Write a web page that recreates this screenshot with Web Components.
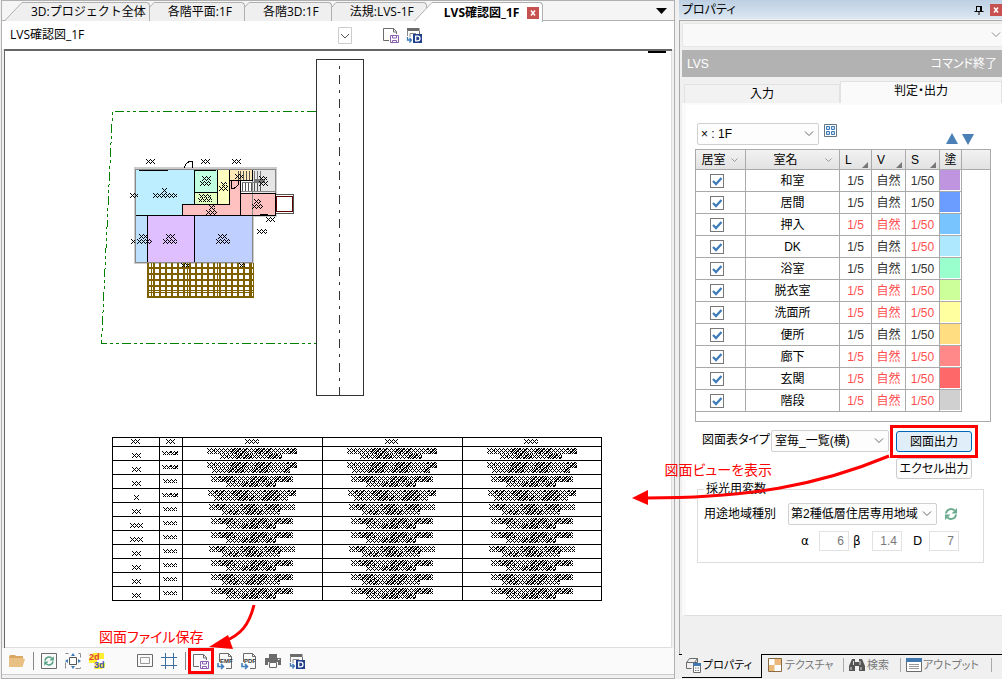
<!DOCTYPE html>
<html lang="ja">
<head>
<meta charset="utf-8">
<title>LVS確認図_1F</title>
<style>
html,body{margin:0;height:100%;overflow:hidden}
body{background:#f0f0f0;color:#000;font:12px/16px "Liberation Sans","Noto Sans CJK JP",sans-serif;font-feature-settings:"palt"}
</style>
</head>
<body>
<cad-app></cad-app>
<script>
const BASE = `<style>
*{box-sizing:border-box}
button,select,input{font:inherit;font-feature-settings:inherit;color:inherit;margin:0}
button{padding:0;border:0;background:none}
select{appearance:none;border:1px solid #d0d0d0;border-radius:2px;background:#fdfdfd url("data:image/svg+xml,%3Csvg xmlns='http://www.w3.org/2000/svg' width='10' height='6'%3E%3Cpath d='M1 .5l4 4 4-4' fill='none' stroke='%23666'/%3E%3C/svg%3E") no-repeat right 4px center}
svg{display:block}
</style>`;
function define(name, html, setup) {
  customElements.define(name, class extends HTMLElement {
    connectedCallback() {
      if (this.shadowRoot) return;
      const root = this.attachShadow({mode: 'open'});
      const t = document.createElement('template');
      t.innerHTML = BASE + (typeof html === 'function' ? html(this) : html);
      root.append(t.content.cloneNode(true));
      if (setup) setup(root, this);
    }
  });
}

/* ---------- icons ---------- */
const page = '<path d="M6 13.500H.5v-12h10l3 3V7M10.500 1.500v3.500h3" fill="none" stroke="#6b6b6b"/>';
const fileOut = s => `<path d="M2.500 9V.5h9l3 3v12H9M11.500.5v3h3" fill="none" stroke="#6b6b6b"/><text x="3" y="10" font-family="Liberation Sans" font-weight="bold" font-size="6" fill="#333">${s}</text><path d="M1 10v3.500h5M4 11l2.500 2.500L4 16" fill="none" stroke="#3c7ab8" stroke-width="1.500"/>`;
const cycle = c => `<path d="M3 7.500a5 5 0 0 1 8.500-3M13 8.500a5 5 0 0 1-8.500 3" fill="none" stroke="${c}" stroke-width="2"/><path d="M14 2v5.500H8.500zM2 14V8.500h5.500z" fill="${c}"/>`;
const ICONS = {
  save: page + '<path d="M7.500 8.500h8v7h-8z" fill="#fff" stroke="#8a5fb0"/><path d="M9.500 8.500v2.500h4V8.500M9.500 15.500v-2h4v2" fill="none" stroke="#8a5fb0"/>',
  export: '<path d="M1 1h12.500v3H1z" fill="#6b6b6b"/><path d="M1.500 3v6M4 10V6.500h6" fill="none" stroke="#888"/><path d="M13.500 4v3" stroke="#6b6b6b"/><path d="M1.500 10v3h4M3.500 11l2 2-2 2.500" fill="none" stroke="#3c7ab8" stroke-width="1.300"/><path d="M7 7h9v9H7z" fill="#23408e"/><path d="M9.700 9.200h2a2.200 2.200 0 0 1 0 4.600h-2z" fill="none" stroke="#fff" stroke-width="1.300"/>',
  folder: '<path d="M0 4l1-2h5l1 1h7v3H0z" fill="#d9a762"/><path d="M0 14V5h13l3 1-2.500 8z" fill="#e8c084"/>',
  refreshbox: '<path d="M.5.5h15v15H.5z" fill="none" stroke="#6b6b6b"/><g transform="translate(1.600 1.600) scale(.8)">' + cycle('#56a184') + '</g>',
  refresh: cycle('#6bab8e'),
  fit: '<path d="M.5.5h15v15H.5z" fill="none" stroke="#888" stroke-dasharray="3 10 3 0"/><path d="M4.500 4.500h7v7h-7z" fill="#fff" stroke="#555"/><path d="M8 0l2 3H6zM8 16l2-3H6zM0 8l3-2v4zM16 8l-3-2v4z" fill="#3c7ab8"/>',
  twothree: '<path d="M0 5L4 0h11v6H8v4H0z" fill="#ffef30"/><path d="M6 10h10v4l-3 2H5z" fill="#ffef30"/><text x="0" y="7" font-family="Liberation Sans" font-weight="bold" font-size="9" fill="#e04040">2d</text><text x="5" y="15" font-family="Liberation Sans" font-weight="bold" font-size="9" fill="#4050c0">3d</text>',
  frame: '<path d="M.5 1.500h15v12H.5z" fill="none" stroke="#6b6b6b"/><path d="M3.500 4.500h9v6h-9z" fill="none" stroke="#999"/>',
  hash: '<path d="M4.500 0v16M12.500 0v16M0 4.500h16M0 12.500h16" fill="none" stroke="#3c6f9f"/>',
  emf: fileOut('EMF'), pdf: fileOut('PDF'),
  printer: '<path d="M4 1h8v4H4zM0 5h16v7h-3V9H3v3H0z" fill="#6b6b6b"/><path d="M4.500 9.500h7v5h-7z" fill="#fff" stroke="#6b6b6b"/><path d="M13 6.500h1.500" stroke="#fff"/>',
  grid: '<path d="M1.500 1.500h12v12h-12z" fill="#fff" stroke="#66747f"/><path d="M3.500 3.500h3v3h-3zM8.500 3.500h3v3h-3zM3.500 8.500h3v3h-3zM8.500 8.500h3v3h-3z" fill="#cfe2f3" stroke="#3c7ab8"/>',
  up: '<path d="M8 2l6 11H2z" fill="#4a80b5"/>',
  down: '<path d="M2 3h12L8 14z" fill="#4a80b5"/>',
  pin: '<path d="M5.500 4v5M5 4.500h4M3.500 9.500h9M8 9v4" fill="none" stroke="#000"/><path d="M9 4h2v6H9z"/>',
  prop: '<path d="M1.500 5.500l3-4h8v4h-11v6h5M9.500 5.500l3-4v4" fill="none" stroke="#6b6b6b"/><path d="M8.500 7.500h7v8h-7z" fill="#fff" stroke="#6b6b6b"/><path d="M8 6h8v3H8z" fill="#4178b0"/><path d="M10 11h1.500m1 0H14m-4 2.500h1.500m1 0H14" stroke="#777"/>',
  texture: '<path d="M1.500 1.500h13v13h-13z" fill="#fff" stroke="#8a6a45"/><path d="M7.500 2H14v6H7.500zM2 8h5.500v6H2z" fill="#eab878"/>',
  search: '<path d="M3 2h3v3h4V2h3l3 7v5h-6V9H6v5H0V9z" fill="#555"/><path d="M2 10v3M12 10v3M4.500 4v4M11 4v4" stroke="#ddd"/>',
  output: '<path d="M.5 1.500h15v13H.5z" fill="#fff" stroke="#6b6b6b"/><path d="M0 1h16v4H0z" fill="#4178b0"/><path d="M3 7.500h10m-10 2h10m-10 2h10" stroke="#999"/>'
};
define('cad-icon', el => `<style>:host{display:block;width:16px;height:16px;flex:none}svg{overflow:visible}</style><svg width="16" height="16" viewBox="0 0 16 16" aria-hidden="true">${ICONS[el.getAttribute('name')]}</svg>`);

/* ---------- document tabs ---------- */
define('doc-tab', el => {
  const on = el.hasAttribute('active'), slope = on || el.hasAttribute('first'), w = slope ? 19 : 5, fill = on ? '#fff' : '#efefef';
  return `<style>
:host{display:flex;height:19px;position:relative}
:host([active]){margin-left:-13px;height:20px;font-weight:bold}
svg{flex:none}
button{flex:1;display:flex;align-items:center;gap:8px;white-space:nowrap;background:${fill};border:1px solid #b0b0b0;border-width:1px 1px 0 0;border-radius:0 4px 0 0;padding:0 12px 0 13px}
:host([first]) button{padding:0 3px 0 8px}
:host([active]) button{padding:0 3px 0 11px}
</style><svg width="${w}" height="${on ? 20 : 19}"><path d="${slope ? 'M0 20L18 .5H19V20z' : 'M0 19V4.500L4 .5H5V19z'}" fill="${fill}"/><path d="${slope ? 'M0 19.500L18 .5h1' : 'M0 5L4 .5h1'}" fill="none" stroke="#b0b0b0"/></svg><button role="tab"><slot></slot></button>`;
});
define('doc-tabs', `<style>
:host{display:flex;height:20px;flex:none;align-items:flex-start;padding:1px 0 0 2px;background:#f5f5f5;border-bottom:1px solid #b0b0b0;font:12px/16px "Open Sans","Noto Sans CJK JP",sans-serif}
.x{display:block;width:12px;height:12px;background:#c75050}
.more{margin:6px 7px 0 auto}
</style>
<doc-tab first>3D:プロジェクト全体</doc-tab><doc-tab>各階平面:1F</doc-tab><doc-tab>各階3D:1F</doc-tab><doc-tab>法規:LVS-1F</doc-tab>
<doc-tab active>LVS確認図_1F<svg class="x" viewBox="0 0 12 12"><path d="M4 3.500l4 5M8 3.500l-4 5" stroke="#fff" stroke-width="1.500"/></svg></doc-tab>
<button class="more" aria-label="タブ一覧"><svg width="11" height="6"><path d="M0 0h11L5.500 6z"/></svg></button>`);

define('view-bar', `<style>
:host{display:flex;height:28px;flex:none;align-items:center;background:#fff;padding:0 0 0 3px;gap:7px;font:12px/16px "Open Sans","Noto Sans CJK JP",sans-serif}
select{width:347px;height:22px;border:0;padding:0 5px;background:#fff url("data:image/svg+xml,%3Csvg xmlns='http://www.w3.org/2000/svg' width='14' height='17'%3E%3Cpath d='M.5.5h13v16H.5z' fill='%23fff' stroke='%23ccc'/%3E%3Cpath d='M3 7l4 4 4-4' fill='none' stroke='%23555'/%3E%3C/svg%3E") no-repeat right center}
button:first-of-type{margin-left:24px}
</style><select aria-label="ビュー"><option>LVS確認図_1F</option></select>
<button aria-label="図面ファイル保存"><cad-icon name="save"></cad-icon></button><button aria-label="図面出力"><cad-icon name="export"></cad-icon></button>`);

/* ---------- drawing ---------- */
/* Annotation too small to resolve at this zoom: a lattice of crossed strokes. */
function scribble(x, y, w, h, dense) {
  let d = '';
  for (let i = 0; i < w; i++) {
    const packed = dense && (((i >> 3) * 5 + x) % 7 > 2) && i > 6;
    for (let j = 0; j < h; j++)
      if (((i + j) & 3) == 0 || ((i - j) & 3) == 0 || (packed && ((i + j) % 3 == 0)))
        d += `M${x + i} ${y + j}h1v1h-1z`;
  }
  return d;
}
function drawing() {
  const R = (x, y, w, h, f) => `<path d="M${x} ${y}h${w}v${h}h${-w}z" fill="${f}"/>`;
  let s = '';
  s += '<path d="M316 111.500H112.500L101.500 343.500H316" fill="none" stroke="#008000" stroke-dasharray="9 3 3 3 3 3"/>';
  s += '<path d="M316.500 59.500h47v336h-47z" fill="#fff" stroke="#333"/><path d="M339.500 66v329" stroke="#333" stroke-dasharray="3 6 9 6"/>';
  s += '<path d="M135 168h141v48h-23v47H135z" fill="none" stroke="#ccc" stroke-width="2"/>';
  s += R(136,170,58,46,'#bdeeff') + R(195,170,22,22,'#c0ffe0') + R(195,193,22,11,'#e0ffc0') + R(218,170,12,34,'#ffffc0') + R(182,204,59,12,'#ffc0c0') + R(230,181,11,24,'#ffc0c0') + R(230,170,11,11,'#ffe8b8') + R(241,170,12,11,'#ffe8b8') + R(253,170,22,23,'#e6e6e6') + R(241,193,35,23,'#ffc0c0') + R(136,216,11,46,'#bde0ff') + R(148,216,46,46,'#dfbfff') + R(195,216,58,46,'#bfcfff');
  s += '<path d="M238.500 171v9m2-9v9m3-9v9m3-9v9m3-9v9m3-9v9M242.500 182v9m3-9v9m3-9v9m3-9v9m3-9v9m3-9v9m3-9v9" stroke="#555"/><path d="M254.500 171v10m3-10v10m3-10v10M242 182.500h22" stroke="#777"/>' + R(254,179,11,4,'#777');
  s += '<path d="M135.500 169.500h140v46h-23v47h-117zM252.500 170v92M241 191.500h34" fill="none" stroke="#888"/>';
  s += '<path d="M139 170.500h29M195 170.500h21M136 215.500h139v-22h-34M194.500 170v34M194 192.500h23M217.500 170v34M229.500 170v34.500H182.500V215M230 180.500h22V170M240.500 181v34M147.500 216v46M194.500 216v46M260 214.500h8" fill="none" stroke="#000"/>';
  s += '<path d="M184.500 168a8 7 0 0 1 8-7v7M239 181a8 8 0 0 1-8 8v-8" fill="none" stroke="#000"/>';
  s += '<path d="M276 194.500h17.500v19H276" fill="#fff" stroke="#555"/><path d="M276.500 196.500h16v15h-16z" fill="none" stroke="#5a0000"/>';
  let deck = '';
  for (let i = 0; i < 18; i++) deck += R(147 + i * 6, 263, 2, 34, '#7f5f00');
  for (const x of [151,154,187,217,251,253]) deck += R(x, 263, 1, 34, '#7f5f00');
  for (const y of [267,273,279,285,296]) deck += R(147, y, 107, 2, '#7f5f00');
  s += deck + R(147,290,107,1,'#7f5f00') + R(147,292,107,1,'#7f5f00') + R(136,262,117,1,'#888');
  let d = '';
  for (const a of [[146,159,9,5],[201,159,9,5],[232,159,9,5],[130,193,8,5],[162,188,5,5],[153,193,24,5],[202,176,9,5],[200,181,11,5],[199,194,12,4],[198,198,14,4],[221,182,6,4],[219,186,9,5],[209,205,6,5],[206,210,11,5],[254,199,7,5],[252,204,11,5],[266,217,9,5],[257,229,10,5],[235,174,8,5],[259,176,8,4],[259,181,9,5],[139,234,8,5],[131,239,4,5],[137,239,15,5],[166,234,9,5],[163,239,14,5],[218,234,9,5],[216,239,14,5],[181,263,8,4],[239,263,6,4]])
    d += scribble(...a);
  const X = [112,159,182,322,462,601];
  let lines = '';
  for (const x of X) lines += `M${x + .5} 437v164`;
  lines += 'M112 437.500h490';
  for (let i = 0; i < 12; i++) lines += `M112 ${446.5 + 14 * i}h490`;
  d += scribble(131,439,9,5) + scribble(166,439,9,5) + scribble(245,439,14,5) + scribble(385,439,13,5) + scribble(524,439,14,5);
  const W = [[90,62],[90,78],[82,50],[88,74],[86,58],[82,50],[82,50],[86,58],[82,50],[82,58],[82,50]];
  W.forEach(([a, b], i) => {
    const t = 446 + 14 * i, n = i == 3 ? 5 : i == 5 || i == 6 ? 13 : 9;
    d += scribble(136 - (n >> 1), t + 7, n, 5) + scribble(a > 86 ? 162 : 163, t + 5, a > 86 ? 16 : 14, 4, 1);
    for (const c of [252, 392, 532]) d += scribble(c - a / 2, t + 2, a, 6, 1) + scribble(c - b / 2 - 1, t + 8, b, 5, 1);
  });
  return s + `<path d="${lines}" stroke="#000"/><path d="${d}"/><path d="M648 51h18v2h-18z"/>`;
}
define('cad-drawing', () => `<style>:host{display:block;flex:1;min-height:0;margin:0 2px;background:#fff;border:solid #666;border-width:2px 0 0 1px;overflow:hidden}
.in{height:100%;border-right:1px solid #ddd;border-bottom:1px solid #ddd;overflow:hidden}</style>
<div class="in"><svg width="666" height="595" shape-rendering="crispEdges" role="img" aria-label="LVS確認図 1F"><g transform="translate(-5 -51)">${drawing()}</g></svg></div>`);

define('output-bar', `<style>
:host{display:flex;flex:none;height:27px;align-items:center;gap:8px;padding-left:7px;background:#fafafa;border-bottom:1px solid #ccc;margin-bottom:3px}
i{height:18px;border-left:1px solid #888;margin-right:-1px}
.gap{width:16px}
.hot{outline:3px solid red;outline-offset:2px}
</style>
<button aria-label="開く"><cad-icon name="folder"></cad-icon></button><i></i>
<button aria-label="更新"><cad-icon name="refreshbox"></cad-icon></button><button aria-label="全体表示"><cad-icon name="fit"></cad-icon></button><button aria-label="2D 3D"><cad-icon name="twothree"></cad-icon></button><span class="gap"></span>
<button aria-label="用紙枠"><cad-icon name="frame"></cad-icon></button><button aria-label="グリッド"><cad-icon name="hash"></cad-icon></button><i></i>
<button class="hot" aria-label="図面ファイル保存"><cad-icon name="save"></cad-icon></button><button aria-label="EMF出力"><cad-icon name="emf"></cad-icon></button><button aria-label="PDF出力"><cad-icon name="pdf"></cad-icon></button><button aria-label="印刷"><cad-icon name="printer"></cad-icon></button><button aria-label="図面へ"><cad-icon name="export"></cad-icon></button>`);

/* ---------- room table ---------- */
const ROOMS = [['和室','kkk','#bf95df'],['居間','kkk','#6b9cff'],['押入','rrr','#78c4ff'],['DK','kkr','#aee8ff'],['浴室','kkk','#99ffcc'],['脱衣室','rrr','#ccff99'],['洗面所','rrr','#ffffa0'],['便所','kkk','#ffdd80'],['廊下','rrr','#ff8888'],['玄関','rrr','#ff6868'],['階段','rrr','#d0d0d0']];
define('room-table', () => {
  const chev = '<svg width="7" height="4"><path d="M.5.5l3 3 3-3" fill="none" stroke="#999"/></svg>', tri = '<svg width="6" height="6"><path d="M6 0v6H0z" fill="#777"/></svg>';
  return `<style>
:host{display:block;border:1px solid #aaa;height:273px;background:#fff;flex:none}
table{border-collapse:separate;border-spacing:0;table-layout:fixed;width:100%}
th,td{padding:0;text-align:center;font-weight:normal;border:solid #aaa;border-width:0 1px 1px 0;overflow:hidden;white-space:nowrap}
th{height:20px;background:linear-gradient(#f2f2f2,#e2e2e2)}
th:last-child{border-right:0}
td{height:22px;color:#333}
td:nth-child(2){color:#000}
td:last-child{border:0}
th div{display:flex;align-items:center;height:19px}
th div span{flex:1;text-align:center}
th svg{margin-right:7px}
th.t span{text-align:left;padding-left:5px}
th.t svg{margin:11px 3px 0 0}
td.r{color:#ff5050}
td.c i{display:block;height:20px;width:20px;margin-bottom:1px}
td:first-child{padding-right:7px}
input{appearance:none;display:block;width:14px;height:14px;margin:0 auto;border:1px solid #777;background:#fff}
input:checked{background:#fff url("data:image/svg+xml,%3Csvg xmlns='http://www.w3.org/2000/svg' width='12' height='12'%3E%3Cpath d='M2 6l3 3 5.500-6' fill='none' stroke='%233f7cb8' stroke-width='2.300'/%3E%3C/svg%3E")}
</style><table><colgroup><col style="width:50px"><col style="width:94px"><col style="width:32px"><col style="width:34px"><col style="width:34px"><col style="width:22px"><col></colgroup>
<thead><tr><th><div><span>居室</span>${chev}</div></th><th><div><span>室名</span>${chev}</div></th><th class="t"><div><span>L</span>${tri}</div></th><th class="t"><div><span>V</span>${tri}</div></th><th class="t"><div><span>S</span>${tri}</div></th><th>塗</th><th></th></tr></thead>
<tbody>${ROOMS.map(([n, k, c]) => `<tr><td><input type="checkbox" checked aria-label="${n}"></td><td>${n}</td><td class="${k[0]}">1/5</td><td class="${k[1]}">自然</td><td class="${k[2]}">1/50</td><td class="c"><i style="background:${c}"></i></td><td></td></tr>`).join('')}</tbody></table>`;
});

/* ---------- property panel ---------- */
define('property-panel', `<style>
:host{display:flex;flex-direction:column;width:323px;flex:none;overflow:hidden}
.title{display:flex;align-items:center;height:19px;flex:none;padding-left:3px;background:linear-gradient(#bccfe2,#dce7f2)}
h2{flex:1;margin:0;font:inherit}
.x{background:#c75050;width:12px;height:12px;margin-left:3px;overflow:hidden}
main{display:flex;flex-direction:column;flex:1;min-height:0;margin-top:1px;border-top:1px solid #aaa;border-left:1px solid #aaa;padding:2px 0 38px 2px}
.obj{flex:none;height:24px;width:100%;border-color:#e2e2e2;opacity:.7;border-right:0;background-position:right 1px center}
.cmd{flex:none;display:flex;justify-content:space-between;align-items:center;height:27px;margin-top:3px;padding:0 5px;background:#b2b2b2;color:#fff}
.tabs{flex:none;display:flex;align-items:flex-end;height:26px;padding-left:2px}
.tabs button{flex:1;height:19px;background:#f2f2f2;border:1px solid #e2e2e2;border-bottom:0}
.tabs .on{height:22px;background:#fafafa;flex:0 0 162px;padding-bottom:4px}
.body{flex:1;min-height:0;display:flex;flex-direction:column;background:#fff;border:solid #fafafa;border-width:2px 0 0 4px;border-bottom:1px solid #ddd;padding:18px 11px 0 9px;overflow:hidden}
.row{display:flex;align-items:center;flex:none}
.floor{align-items:flex-start;height:26px;padding-left:2px}
.floor select{width:122px;height:22px;padding:0 3px}
.floor .list{margin-left:4px}
.floor .up{margin:8px 0 0 auto}
.floor .down{margin:8px 15px 0 0}
.out{margin:8px 19px 0 7px;align-items:flex-start}
.out label{width:69px;margin-top:2px;white-space:nowrap}
.out select{width:118px;height:22px;padding:0 3px}
.col{display:flex;flex-direction:column;gap:6px;margin:1px 0 0 auto;width:76px}
.col button{height:21px;width:100%;border:1px solid #ccc;border-radius:3px;background:#fdfdfd;white-space:nowrap}
.hot{height:21px;outline:3px solid red;outline-offset:3px}
.col .hot button{background:#e0eef9;border-color:#0067b8}
fieldset{margin:2px 7px 0 2px;padding:0 0 11px;border:1px solid #dcdcdc;min-width:0}
legend{margin-left:6px;padding:0 2px;height:16px}
.zone{padding:6px 0 0 6px}
.zone label{width:84px}
.zone select{width:149px;height:22px;padding:0 18px 0 2px}
.zone cad-icon{margin-left:6px}
.num{justify-content:flex-end;padding:6px 24px 0 0}
.num label{width:11px;margin:0 7px 0 6px;font:12px/16px "DejaVu Sans","Liberation Sans",sans-serif}
.num label:nth-of-type(2){margin:0 8px 0 4px}
.num label:nth-of-type(3){margin:0 5px 0 11px}
.num input{width:30px;height:20px;border:1px solid #e2e2e2;padding:0 4px;text-align:right;background:#fff;color:#777}
nav{display:flex;flex:none;height:24px;color:#777;border-top:1px solid #000;margin-bottom:1px;font-size:11px}
nav a{display:flex;flex:none;width:82px;align-items:center;gap:2px;color:inherit;text-decoration:none;white-space:nowrap;padding:0 0 3px 5px;border:0}
nav a::after{content:"";height:14px;margin-left:auto;border-right:1px solid #aaa}
nav .on{width:80px;color:#000;background:#f0f0f0;border:solid #000;border-width:0 1px 1px 0;margin:-1px 0 0 3px;padding:1px 0 3px 3px}
nav .on::after{display:none}
nav .s{width:57px}
nav .o{width:91px;gap:1px}
</style>
<div class="title"><h2>プロパティ</h2><button aria-label="固定"><cad-icon name="pin"></cad-icon></button><button class="x" aria-label="閉じる"><svg width="12" height="12"><path d="M4 3.500l4 5M8 3.500l-4 5" stroke="#fff" stroke-width="1.500"/></svg></button></div>
<main>
<select class="obj" aria-label="対象"><option></option></select>
<div class="cmd"><span>LVS</span><span>コマンド終了</span></div>
<div class="tabs" role="tablist"><button role="tab">入力</button><button role="tab" class="on">判定・出力</button></div>
<div class="body">
<div class="row floor"><select aria-label="階"><option>× : 1F</option></select><button class="list" aria-label="一覧"><cad-icon name="grid"></cad-icon></button><button class="up" aria-label="上へ"><cad-icon name="up"></cad-icon></button><button class="down" aria-label="下へ"><cad-icon name="down"></cad-icon></button></div>
<room-table></room-table>
<div class="row out"><label for="kind">図面表タイプ</label><select id="kind"><option>室毎_一覧(横)</option></select><div class="col"><div class="hot"><button>図面出力</button></div><button>エクセル出力</button></div></div>
<fieldset><legend>採光用変数</legend>
<div class="row zone"><label for="zone">用途地域種別</label><select id="zone"><option>第2種低層住居専用地域</option></select><cad-icon name="refresh"></cad-icon></div>
<div class="row num"><label for="a">α</label><input id="a" value="6"><label for="b">β</label><input id="b" value="1.4"><label for="d">D</label><input id="d" value="7"></div>
</fieldset>
</div></main>
<nav><a href="#prop" class="on"><cad-icon name="prop"></cad-icon>プロパティ</a><a href="#tex"><cad-icon name="texture"></cad-icon>テクスチャ</a><a href="#find" class="s"><cad-icon name="search"></cad-icon>検索</a><a href="#out" class="o"><cad-icon name="output"></cad-icon>アウトプット</a></nav>`);

/* ---------- call-outs over the window ---------- */
define('call-out', `<style>:host{position:absolute;pointer-events:none;color:red;font-size:14px;line-height:20px;white-space:nowrap}
::slotted(svg){position:absolute;left:0;top:0;overflow:visible}</style><slot></slot>`);

define('cad-app', `<style>
:host{display:flex;gap:4px;height:100vh;position:relative;overflow:hidden;border-bottom:1px solid #ccc}
.doc{flex:1;min-width:0;display:flex;flex-direction:column;margin-left:1px;border:1px solid #b0b0b0}
.save{left:99px;bottom:32px}
.show{right:230px;bottom:199px}
</style>
<div class="doc"><doc-tabs></doc-tabs><view-bar></view-bar><cad-drawing></cad-drawing><output-bar></output-bar></div>
<property-panel></property-panel>
<call-out class="save">図面ファイル保存<svg width="140" height="50"><path d="M155-22C150-2 142 8 124 15" fill="none" stroke="red" stroke-width="3"/><path d="M110 20L129 8l5 14z" fill="red"/></svg></call-out>
<call-out class="show">図面ビューを表示<svg width="260" height="60"><path d="M224-4C152 26 82 38-18 38" fill="none" stroke="red" stroke-width="3"/><path d="M-33 38l16-8v15z" fill="red"/></svg></call-out>`);
</script>
</body>
</html>
